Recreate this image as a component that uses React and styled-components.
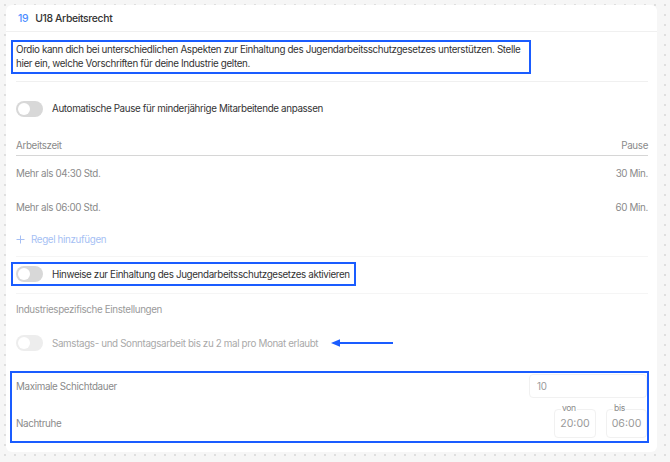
import React from 'react'
import styled, { createGlobalStyle, css } from 'styled-components'

const GlobalStyle = createGlobalStyle`
  html, body {
    margin: 0;
    padding: 0;
  }
  body {
    width: 670px;
    height: 462px;
    overflow: hidden;
    font-family: Inter, 'Liberation Sans', sans-serif;
    font-size: 9.8px;
    letter-spacing: -0.35px;
    background-color: #f6f6f6;
    background-image: radial-gradient(#dedede 0.7px, transparent 1px);
    background-size: 10px 10px;
  }
`

const highlight = css`
  outline: 2px solid #1a5cff;
`

const Page = styled.div`
  padding: 5px 13px 10px 6px;
`

const Card = styled.section`
  background: #fff;
  border-radius: 6px;
  height: 447px;
  overflow: hidden;
`

const Header = styled.header`
  display: flex;
  align-items: center;
  gap: 7px;
  box-sizing: border-box;
  height: 27px;
  padding: 0 12px;
  border-bottom: 1px solid #f0f0f0;
  font-size: 10.4px;
  font-weight: 500;
  color: #333;
`

const Number = styled.span`
  color: #4c8dff;
`

const Body = styled.div`
  padding: 0 9px 0 10px;
`

const Description = styled.p`
  margin: 10px 0 0 -3px;
  padding: 1px 0 1px 3px;
  width: 513px;
  line-height: 14px;
  color: #333;
  ${({ $highlighted }) => $highlighted && highlight};
`

const Divider = styled.div`
  height: 1px;
  background: ${({ $strong }) => ($strong ? '#f0f0f0' : '#f5f5f5')};
  margin: ${({ $margin }) => $margin || '0'};
`

const ToggleRow = styled.div`
  display: flex;
  align-items: center;
  gap: 9px;
  box-sizing: border-box;
  height: ${({ $height }) => $height || 20}px;
  color: ${({ $disabled }) => ($disabled ? '#a9a9a9' : '#333')};
  width: fit-content;
  ${({ $highlighted }) => $highlighted && css`
    ${highlight};
    margin: 7px 0 0 -3px;
    padding: 2px 4px 2px 3px;
  `}
`

const Switch = styled.span`
  position: relative;
  width: 27px;
  height: 16px;
  border-radius: 8px;
  background: ${({ $disabled }) => ($disabled ? '#ededed' : '#d8d8d8')};
  flex-shrink: 0;

  &::after {
    content: '';
    position: absolute;
    left: 2px;
    top: 2px;
    width: 12px;
    height: 12px;
    border-radius: 50%;
    background: #fff;
  }
`

const Table = styled.div`
  display: flex;
  flex-direction: column;
`

const TableHead = styled.div`
  display: flex;
  justify-content: space-between;
  align-items: center;
  height: 20px;
  border-bottom: 1px solid #d6d6d6;
  color: #8a8a8a;
`

const TableRow = styled.div`
  display: flex;
  justify-content: space-between;
  align-items: center;
  height: 34px;
  color: #8a8a8a;
`

const AddRule = styled.button`
  display: flex;
  align-items: center;
  gap: 6px;
  height: 30px;
  padding: 0;
  border: 0;
  background: none;
  font: inherit;
  letter-spacing: inherit;
  color: #a6bff4;
`

const SectionLabel = styled.div`
  height: 30px;
  display: flex;
  align-items: center;
  color: #9a9a9a;
`

const Arrow = styled.svg`
  margin-left: 4px;
`

const Settings = styled.div`
  margin: 11px 1px 0 -4px;
  padding-left: 4px;
  ${({ $highlighted }) => $highlighted && highlight};
`

const SettingRow = styled.div`
  display: flex;
  justify-content: space-between;
  align-items: center;
  padding: ${({ $padding }) => $padding};
  color: #8a8a8a;
`

const Field = styled.div`
  position: relative;
`

const FieldLabel = styled.span`
  position: absolute;
  top: -6px;
  left: 7px;
  padding: 0 1px;
  background: #fff;
  font-size: 8.6px;
  line-height: 10px;
  color: #8a8a8a;
`

const Input = styled.div`
  box-sizing: border-box;
  width: ${({ $width }) => $width}px;
  height: ${({ $height }) => $height}px;
  display: flex;
  align-items: center;
  justify-content: ${({ $center }) => ($center ? 'center' : 'flex-start')};
  padding: 0 7px;
  border: 1px solid #f1f1f1;
  border-radius: 4px;
  font-size: ${({ $center }) => ($center ? 10.6 : 9.8)}px;
  letter-spacing: ${({ $center }) => ($center ? '0' : 'inherit')};
  color: #9a9a9a;
`

const TimeGroup = styled.div`
  display: flex;
  gap: 10px;
`

const Switcher = ({ disabled }) => <Switch $disabled={disabled} />

const App = () => {
  return (
    <Page>
      <GlobalStyle />
      <Card>
        <Header>
          <Number>19</Number>
          <span>U18 Arbeitsrecht</span>
        </Header>
        <Body>
          <Description $highlighted>
            Ordio kann dich bei unterschiedlichen Aspekten zur Einhaltung des
            Jugendarbeitsschutzgesetzes unterstützen. Stelle hier ein, welche
            Vorschriften für deine Industrie gelten.
          </Description>
          <Divider $strong $margin="9px 0 0" />
          <ToggleRow $height={53}>
            <Switcher />
            Automatische Pause für minderjährige Mitarbeitende anpassen
          </ToggleRow>

          <Table>
            <TableHead>
              <span>Arbeitszeit</span>
              <span>Pause</span>
            </TableHead>
            <TableRow>
              <span>Mehr als 04:30 Std.</span>
              <span>30 Min.</span>
            </TableRow>
            <TableRow>
              <span>Mehr als 06:00 Std.</span>
              <span>60 Min.</span>
            </TableRow>
          </Table>

          <AddRule>
            <svg width="9" height="9" viewBox="0 0 9 9">
              <path d="M4.5 0.5v8M0.5 4.5h8" stroke="#a6bff4" strokeWidth="1" />
            </svg>
            Regel hinzufügen
          </AddRule>

          <Divider $margin="2px 0 0" />
          <ToggleRow $highlighted>
            <Switcher />
            Hinweise zur Einhaltung des Jugendarbeitsschutzgesetzes aktivieren
          </ToggleRow>
          <Divider $margin="9px 0 0" />

          <SectionLabel>Industriespezifische Einstellungen</SectionLabel>
          <ToggleRow $disabled $height={38}>
            <Switcher disabled />
            Samstags- und Sonntagsarbeit bis zu 2 mal pro Monat erlaubt
            <Arrow width="62" height="10" viewBox="0 0 62 10">
              <path d="M62 5H7" stroke="#1a5cff" strokeWidth="1.8" />
              <path d="M0 5L9 1.2V8.8Z" fill="#1a5cff" />
            </Arrow>
          </ToggleRow>

          <Settings $highlighted>
            <SettingRow $padding="1px 0 1px">
              <span>Maximale Schichtdauer</span>
              <Input $width={118} $height={24}>10</Input>
            </SettingRow>
            <SettingRow $padding="10px 0 3px">
              <span>Nachtruhe</span>
              <TimeGroup>
                <Field>
                  <FieldLabel>von</FieldLabel>
                  <Input $width={42} $height={29} $center>20:00</Input>
                </Field>
                <Field>
                  <FieldLabel>bis</FieldLabel>
                  <Input $width={41} $height={29} $center>06:00</Input>
                </Field>
              </TimeGroup>
            </SettingRow>
          </Settings>
        </Body>
      </Card>
    </Page>
  )
}

export default App
